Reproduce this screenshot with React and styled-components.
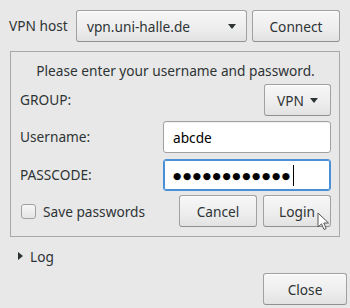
import React from "react";
import styled, { createGlobalStyle, css } from "styled-components";

const Global = createGlobalStyle`
  html, body { margin: 0; padding: 0; background: #e8e8e8; }
  body {
    font-family: "Noto Sans", "DejaVu Sans", sans-serif;
    font-size: 13.7px;
    color: #2e3436;
    width: 350px;
    height: 308px;
    overflow: hidden;
  }
`;

const Window = styled.div`
  position: relative;
  width: 350px;
  height: 308px;
  box-sizing: border-box;
  padding-top: 10px;
  display: flex;
  flex-direction: column;
  & > * { flex-shrink: 0; }
`;

const TopRow = styled.div`
  display: flex;
  align-items: center;
  height: 32px;
  padding-left: 9px;
`;

const HostLabel = styled.span`
  width: 67px;
  line-height: 20px;
`;

const buttonLook = css`
  box-sizing: border-box;
  height: 32px;
  border: 1px solid #a1a1a1;
  border-bottom-color: #8f8f8f;
  border-radius: 3px;
  background: linear-gradient(to bottom, #f7f7f7 0%, #ededed 60%, #e2e2e2 100%);
  box-shadow: inset 0 1px 0 rgba(255, 255, 255, 0.8);
  color: #2e3436;
  font: inherit;
  display: flex;
  align-items: center;
  flex-shrink: 0;
`;

const Combo = styled.div`
  ${buttonLook};
  width: 171px;
  padding: 0 10px 0 10px;
  justify-content: space-between;
`;

const Button = styled.button`
  ${buttonLook};
  width: ${(p) => p.$w}px;
  margin-left: ${(p) => p.$ml || 0}px;
  justify-content: center;
  padding: 0;
  position: relative;
`;

const Arrow = styled.span`
  width: 0;
  height: 0;
  border-left: 4px solid transparent;
  border-right: 4px solid transparent;
  border-top: 5px solid #2e3436;
  margin-left: ${(p) => p.$ml || 0}px;
`;

const Frame = styled.div`
  box-sizing: border-box;
  margin: 9px 0 0 10px;
  width: 330px;
  height: 186px;
  border: 1px solid #a8a8a8;
  padding: 9px 8px 0 9px;
  display: flex;
  flex-direction: column;
  & > * { flex-shrink: 0; }
`;

const Prompt = styled.div`
  text-align: center;
  line-height: 20px;
  height: 20px;
  margin-bottom: 3px;
`;

const FormRow = styled.div`
  display: flex;
  align-items: center;
  justify-content: space-between;
  height: 32px;
  margin-top: ${(p) => p.$mt || 0}px;
`;

const Label = styled.span`
  line-height: 20px;
`;

const Entry = styled.div`
  box-sizing: border-box;
  width: 168px;
  height: 32px;
  border: 1px solid ${(p) => (p.$focus ? "#4a90d9" : "#a1a1a1")};
  box-shadow: ${(p) =>
    p.$focus ? "inset 0 0 0 1px #4a90d9" : "inset 0 1px 1px rgba(0,0,0,0.06)"};
  border-radius: 3px;
  background: #ffffff;
  padding: 0 9px;
  display: flex;
  align-items: center;
  color: #000;
`;

const Dots = styled.span`
  font-family: "DejaVu Sans", sans-serif;
  font-size: 9.5px;
  letter-spacing: 1.6px;
  color: #000;
`;

const Caret = styled.span`
  width: 1px;
  height: 21px;
  background: #000;
  margin-left: 1px;
`;

const CheckWrap = styled.label`
  display: flex;
  align-items: center;
  margin-left: 1px;
`;

const Check = styled.span`
  box-sizing: border-box;
  width: 15px;
  height: 15px;
  border: 1px solid #a1a1a1;
  border-radius: 3px;
  background: linear-gradient(to bottom, #f7f7f7, #e4e4e4);
  margin-right: 7px;
`;

const Buttons = styled.div`
  display: flex;
  gap: 6px;
`;

const LogRow = styled.div`
  display: flex;
  align-items: center;
  margin: 12px 0 0 18px;
  height: 14px;
`;

const Expander = styled.span`
  width: 0;
  height: 0;
  border-top: 4px solid transparent;
  border-bottom: 4px solid transparent;
  border-left: 5px solid #2e3436;
  margin-right: 7px;
`;

const Footer = styled.div`
  display: flex;
  justify-content: flex-start;
  padding-left: 263px;
  margin-top: 10px;
`;

const Pointer = styled.svg`
  position: absolute;
  right: -1px;
  top: 16px;
`;

export default function App() {
  return (
    <>
      <Global />
      <Window>
        <TopRow>
          <HostLabel>VPN host</HostLabel>
          <Combo>
            <span>vpn.uni-halle.de</span>
            <Arrow />
          </Combo>
          <Button $w={88} $ml={5}>Connect</Button>
        </TopRow>
        <Frame>
          <Prompt>Please enter your username and password.</Prompt>
          <FormRow>
            <Label>GROUP:</Label>
            <Button $w={67}>
              VPN
              <Arrow $ml={6} />
            </Button>
          </FormRow>
          <FormRow $mt={5}>
            <Label>Username:</Label>
            <Entry>abcde</Entry>
          </FormRow>
          <FormRow $mt={6}>
            <Label>PASSCODE:</Label>
            <Entry $focus>
              <Dots>●●●●●●●●●●●●</Dots>
              <Caret />
            </Entry>
          </FormRow>
          <FormRow $mt={4}>
            <CheckWrap>
              <Check />
              Save passwords
            </CheckWrap>
            <Buttons>
              <Button $w={78}>Cancel</Button>
              <Button $w={68}>
                Login
                <Pointer width="14" height="19" viewBox="0 0 14 19">
                  <path
                    d="M1 1 L1 15 L4.5 11.8 L7 17.5 L9.2 16.5 L6.8 11 L11.5 11 Z"
                    fill="#ffffff"
                    stroke="#555753"
                    strokeWidth="1"
                    strokeLinejoin="round"
                  />
                </Pointer>
              </Button>
            </Buttons>
          </FormRow>
        </Frame>
        <LogRow>
          <Expander />
          <span>Log</span>
        </LogRow>
        <Footer>
          <Button $w={84}>Close</Button>
        </Footer>
      </Window>
    </>
  );
}
